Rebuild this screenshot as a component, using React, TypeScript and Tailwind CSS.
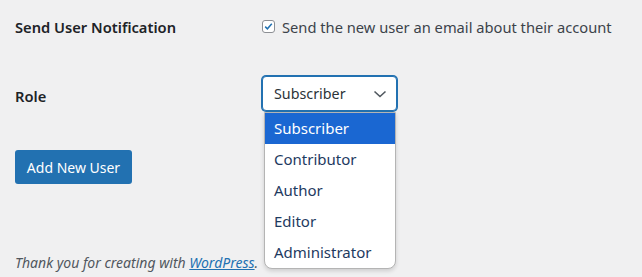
const roles = ['Subscriber', 'Contributor', 'Author', 'Editor', 'Administrator']

function Chevron() {
  return (
    <svg width="14" height="8" viewBox="0 0 14 8" fill="none" className="text-[#50575e]">
      <path d="M1.5 1.5 L7 6.5 L12.5 1.5" stroke="currentColor" strokeWidth="1.6" />
    </svg>
  )
}

function Checkbox() {
  return (
    <span className="flex h-[13px] w-[13px] items-center justify-center rounded-[3px] border border-[#8c8f94] bg-white">
      <svg width="11" height="11" viewBox="0 0 11 11" fill="none">
        <path d="M2.2 5.6 L4.4 7.8 L8.8 2.8" stroke="#2271b1" strokeWidth="1.5" />
      </svg>
    </span>
  )
}

export default function App() {
  return (
    <div className="h-[277px] w-[642px] overflow-hidden bg-[#f0f0f1] pl-[15px] font-['Noto_Sans',sans-serif] text-[14.7px] text-[#1d2327]">
      <div className="mt-[15px] flex h-[24px] items-center">
        <div className="w-[247px] font-semibold">Send User Notification</div>
        <label className="flex items-center gap-[7px] text-[#3c434a]">
          <Checkbox />
          <span>Send the new user an email about their account</span>
        </label>
      </div>

      <div className="mt-[37px] flex">
        <div className="w-[247px] pt-[9px] font-semibold">Role</div>
        <div className="relative">
          <div className="flex h-[35px] w-[135px] items-center justify-between rounded-[4px] border border-[#2271b1] bg-white pl-[11px] pr-[9px] shadow-[0_0_0_1px_#2271b1]">
            <span className="text-[14.3px] text-[#2c3338]">Subscriber</span>
            <Chevron />
          </div>
          <ul className="absolute left-[2px] top-[36px] z-10 w-[132px] overflow-hidden rounded-b-[8px] border border-[#b4b4b4] bg-white shadow-[0_2px_4px_rgba(0,0,0,0.15)]">
            {roles.map((r, i) => (
              <li
                key={r}
                className={
                  i === 0
                    ? 'flex h-[31px] items-center bg-[#1a67d2] pl-[9px] text-[15px] text-white'
                    : 'flex h-[31px] items-center pl-[9px] text-[15px] text-[#1e3a5f]'
                }
              >
                {r}
              </li>
            ))}
          </ul>
        </div>
      </div>

      <button
        type="button"
        className="mt-[39px] flex h-[34px] w-[117px] items-center justify-center rounded-[3px] bg-[#2271b1] text-[14px] text-white"
      >
        Add New User
      </button>

      <p className="mt-[70px] text-[14px] italic leading-[18px] text-[#50575e]">
        Thank you for creating with{' '}
        <a href="#" className="text-[#2271b1] underline">
          WordPress
        </a>
        .
      </p>
    </div>
  )
}
